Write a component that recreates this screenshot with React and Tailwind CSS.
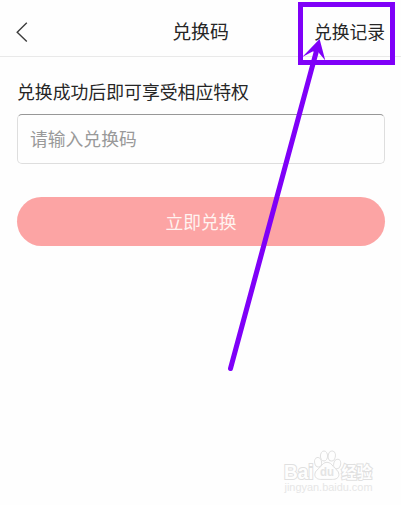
function TopBar() {
  return (
    <header className="flex h-[57px] items-center border-b border-[#e9e9e9] pt-[7px]">
      <button className="flex flex-1 pl-4" aria-label="返回">
        <svg width="12" height="20" viewBox="0 0 12 20" fill="none" stroke="#3c3c3c" strokeWidth="1.4">
          <path d="M10.8 0.8 1.2 10.2 10.8 19.4" />
        </svg>
      </button>
      <h1 className="pb-px text-[18.9px] leading-6">兑换码</h1>
      <div className="flex flex-1 justify-end pr-4 pb-[2px]">
        <a className="text-[17.8px] leading-6 whitespace-nowrap">兑换记录</a>
      </div>
    </header>
  );
}

function Watermark() {
  return (
    <svg
      className="absolute left-[270px] top-[440px]"
      width="131"
      height="65"
      viewBox="0 0 131 65"
      fill="#fefefe"
      stroke="#e0e0e0"
      strokeWidth="1"
    >
      <g fontFamily="Liberation Sans, Noto Sans CJK SC, sans-serif" fontWeight="700">
        <text x="14" y="38.5" fontSize="20.5" textLength="29.5" lengthAdjust="spacingAndGlyphs" paintOrder="stroke" strokeWidth="2">Bai</text>
        <ellipse cx="48.1" cy="22.3" rx="3.5" ry="4.8" transform="rotate(-10 48.1 22.3)" />
        <ellipse cx="54" cy="16" rx="3.6" ry="5" />
        <ellipse cx="61.8" cy="16" rx="3.6" ry="5" transform="rotate(8 61.8 16)" />
        <ellipse cx="67.2" cy="24" rx="3.5" ry="4.8" transform="rotate(12 67.2 24)" />
        <path d="M57 22.3c3 0 4.8 2.2 6.3 4.2 2.3 2.9 5.6 4.2 5.6 7.9 0 3.5-2.7 5-6.5 5H50.8c-3.5 0-6-1.8-6-5 0-3.7 3.6-5 5.9-7.9 1.6-2 3.2-4.2 6.3-4.2Z" />
        <text x="50" y="36.3" fontSize="13" fill="#e4e4e4" stroke="none" textLength="14" lengthAdjust="spacingAndGlyphs">du</text>
        <text x="71.5" y="37.5" fontSize="15.5" textLength="30.5" lengthAdjust="spacingAndGlyphs" paintOrder="stroke" strokeWidth="2">经验</text>
      </g>
      <text
        x="14.5"
        y="51.2"
        fontFamily="Liberation Sans, sans-serif"
        fontSize="10.5"
        fill="#e6e6e6"
        stroke="none"
        textLength="88"
        lengthAdjust="spacingAndGlyphs"
      >
        jingyan.baidu.com
      </text>
    </svg>
  );
}

// Purple frame and arrow pointing at the history link
function Callout() {
  return (
    <>
      <div className="pointer-events-none absolute left-[298px] top-[2px] h-[63px] w-[97px] border-[5px] border-[#7f00f8]" />
      <svg className="pointer-events-none absolute left-0 top-0" width="401" height="505" viewBox="0 0 401 505">
        <path d="M230.5 368.5 316.2 52" stroke="#7f00f8" strokeWidth="5" strokeLinecap="round" />
        <path d="M319.6 39 325.3 60.5 318.2 52 312.6 51.5 302.3 57Z" fill="#7f00f8" />
      </svg>
    </>
  );
}

export default function App() {
  return (
    <div className="relative h-[505px] w-[401px] overflow-hidden bg-[#fefefe] font-['Noto_Sans_CJK_SC',sans-serif] text-[#262626]">
      <TopBar />
      <main className="px-4 pt-[22px]">
        <p className="pl-px text-[17.85px] leading-6">兑换成功后即可享受相应特权</p>
        <div className="mt-[11px] ml-px flex h-[50px] w-[368px] items-center rounded-[5px] border border-t-[#979797] border-r-[#dedede] border-b-[#dedede] border-l-[#dedede] pb-[2px] pl-[12px] text-[17.8px] text-[#999999]">
          请输入兑换码
        </div>
        <button className="mt-[33px] ml-px flex h-[49px] w-[368px] items-center justify-center rounded-full bg-[#fca4a4] text-[17.8px] text-[#fff3f0]">
          立即兑换
        </button>
      </main>
      <Watermark />
      <Callout />
    </div>
  );
}
